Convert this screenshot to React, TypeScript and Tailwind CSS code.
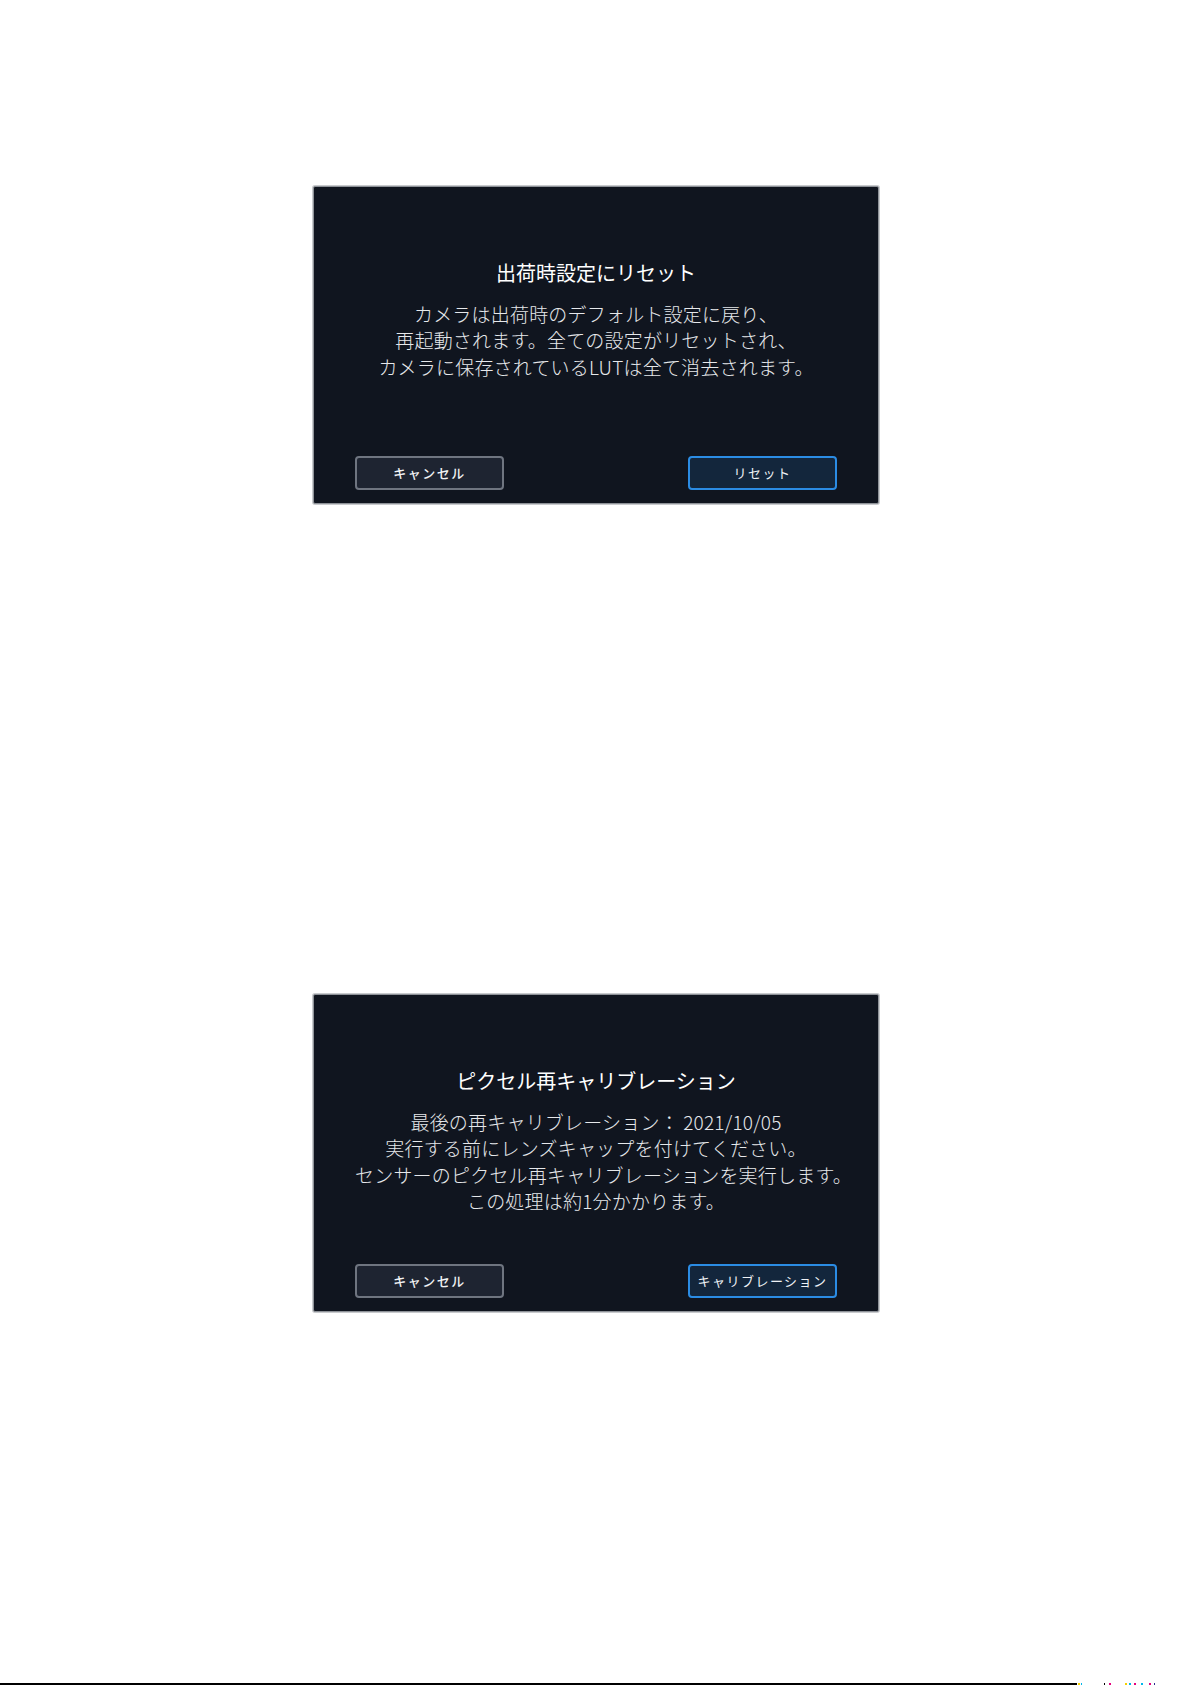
const font = { fontFamily: '"Noto Sans CJK JP", "Noto Sans", sans-serif' };

type DialogProps = {
  title: string;
  lines: string[];
  action: string;
};

function Dialog({ title, lines, action }: DialogProps) {
  return (
    <div className="mx-auto flex h-[318px] w-[566px] flex-col rounded-[2px] border border-[#8e9298] bg-[#10151f] px-[41px] pb-[13px] pt-[72px] shadow-[0_0_0_1px_#c8cacd]">
      <h2 className="text-center text-[20px] font-normal leading-[28px] text-white">{title}</h2>
      <div className="mt-[14px] text-center text-[19px] font-light leading-[26.4px] tracking-[0.2px] text-[#e6e8eb]">
        {lines.map((l) => (
          <p key={l} className="whitespace-nowrap">{l}</p>
        ))}
      </div>
      <div className="mt-auto flex justify-between">
        <button className="h-[34px] w-[149px] rounded-[4px] border-2 border-[#6f7580] bg-[#1e2431] text-[13px] font-medium tracking-[1.5px] text-[#f1f2f4]">
          キャンセル
        </button>
        <button className="h-[34px] w-[149px] rounded-[4px] border-2 border-[#2b8ce4] bg-[#13263c] text-[13px] tracking-[1.5px] text-[#eef1f5]">
          {action}
        </button>
      </div>
    </div>
  );
}

export default function App() {
  return (
    <div className="relative h-[1685px] w-[1192px] bg-white" style={font}>
      <div className="pt-[186px]">
        <Dialog
          title="出荷時設定にリセット"
          lines={[
            'カメラは出荷時のデフォルト設定に戻り、',
            '再起動されます。全ての設定がリセットされ、',
            'カメラに保存されているLUTは全て消去されます。',
          ]}
          action="リセット"
        />
        <div className="h-[490px]" />
        <Dialog
          title="ピクセル再キャリブレーション"
          lines={[
            '最後の再キャリブレーション： 2021/10/05',
            '実行する前にレンズキャップを付けてください。',
            'センサーのピクセル再キャリブレーションを実行します。',
            'この処理は約1分かかります。',
          ]}
          action="キャリブレーション"
        />
      </div>
      {/* print trim marks at the bottom edge */}
      <div className="absolute bottom-0 left-0 flex h-[2px] w-full items-end">
        <div className="h-[2px] w-[1077px] bg-black" />
        <div className="ml-[1px] h-[2px] w-[2px] bg-[#f4d000]" />
        <div className="ml-[1px] h-[2px] w-[1px] bg-[#00b7eb]" />
        <div className="ml-[22px] h-[2px] w-[1px] bg-black" />
        <div className="ml-[4px] h-[2px] w-[2px] bg-[#e6007e]" />
        <div className="ml-[14px] h-[2px] w-[2px] bg-[#f4d000]" />
        <div className="ml-[2px] h-[2px] w-[2px] bg-[#00b7eb]" />
        <div className="ml-[3px] h-[2px] w-[2px] bg-[#e6007e]" />
        <div className="ml-[5px] h-[2px] w-[2px] bg-[#00b7eb]" />
        <div className="ml-[6px] h-[2px] w-[2px] bg-[#e6007e]" />
        <div className="ml-[3px] h-[2px] w-[1px] bg-[#2d2a8c]" />
      </div>
    </div>
  );
}
